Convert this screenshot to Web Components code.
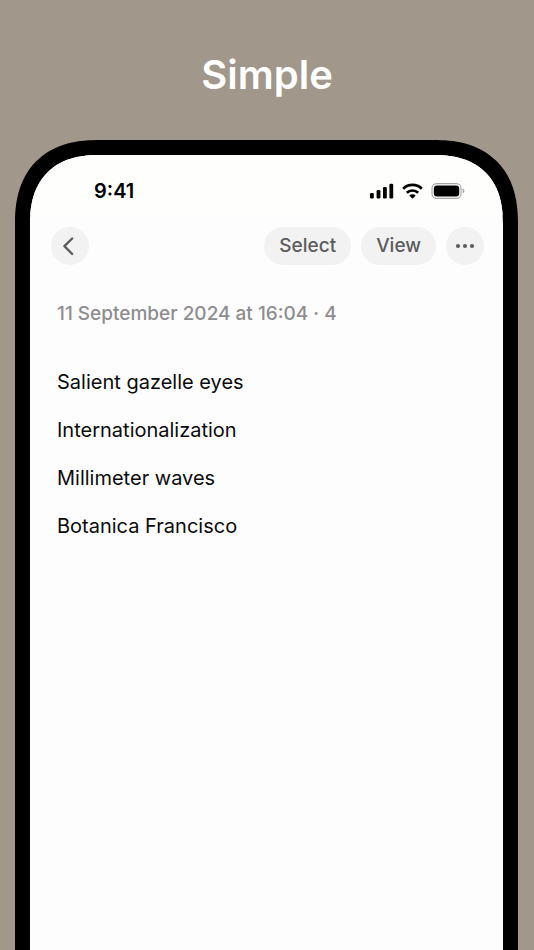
<!DOCTYPE html>
<html lang="en">
<head>
<meta charset="utf-8">
<meta name="viewport" content="width=device-width, initial-scale=1">
<title>Simple</title>
<style>
  html, body { margin: 0; height: 100%; }
  body { background: #a1978a; font-family: Inter, "Liberation Sans", sans-serif; color: #0b0b0b; }
</style>
</head>
<body>
<promo-page heading="Simple">
  <phone-frame>
    <status-bar time="9:41"></status-bar>
    <nav-bar></nav-bar>
    <note-view date="11 September 2024 at 16:04 · 4">
      <note-line>Salient gazelle eyes</note-line>
      <note-line>Internationalization</note-line>
      <note-line>Millimeter waves</note-line>
      <note-line>Botanica Francisco</note-line>
    </note-view>
  </phone-frame>
</promo-page>
<script>
function define(name, html) {
  const template = document.createElement('template');
  template.innerHTML = html;
  customElements.define(name, class extends HTMLElement {
    connectedCallback() {
      if (this.shadowRoot) return;
      this.attachShadow({ mode: 'open' }).append(template.content.cloneNode(true));
      for (const el of this.shadowRoot.querySelectorAll('[data-text]')) {
        el.textContent = this.getAttribute(el.dataset.text);
      }
    }
  });
}

define('promo-page', `
<style>
  :host { display: flex; flex-direction: column; height: 100vh; overflow: hidden; }
  h1 { margin: 0; padding: 50px 0 40px; font-size: 40px; line-height: 50px; font-weight: 600; color: #fff; text-align: center; }
  ::slotted(phone-frame) { flex: 1; }
</style>
<h1 data-text="heading"></h1>
<slot></slot>`);

define('phone-frame', `
<style>
  :host {
    display: block; box-sizing: border-box; margin: 0 16px 0 15px; padding: 15px 15px 0; background: #000;
    border-radius: 84px 84px 0 0; corner-shape: superellipse(1.25);
  }
  main {
    height: 100%; background: #fdfdfd; overflow: hidden;
    border-radius: 69px 69px 0 0; corner-shape: superellipse(1.25);
  }
</style>
<main><slot></slot></main>`);

define('status-bar', `
<style>
  :host { display: flex; justify-content: space-between; align-items: center; box-sizing: border-box; height: 60px; padding: 12px 38px 0 64px; background: #fefefd; color: #000; }
  time { font-size: 20px; line-height: 24px; font-weight: 600; }
  .icons { display: flex; align-items: center; gap: 8px; }
  svg { display: block; }
</style>
<time data-text="time"></time>
<div class="icons">
  <svg width="25" height="16" viewBox="0 0 25 16" role="img" aria-label="Signal">
    <rect x="1" y="10" width="3.8" height="5.5" rx="1.2"/><rect x="7.6" y="7" width="3.8" height="8.5" rx="1.2"/>
    <rect x="14" y="4" width="3.8" height="11.5" rx="1.2"/><rect x="20.4" y="0.8" width="3.8" height="14.7" rx="1.2"/>
  </svg>
  <svg width="21" height="16" viewBox="0 0 21 16" role="img" aria-label="Wi-Fi">
    <g fill="none" stroke="#000" stroke-width="2.7">
      <path d="M1.2 5.7A13.4 13.4 0 0 1 19.8 5.7"/><path d="M4.8 9.8A8.2 8.2 0 0 1 16.2 9.8"/>
    </g>
    <path d="M10.5 15.8 7.3 12.6A4.6 4.6 0 0 1 13.7 12.6Z"/>
  </svg>
  <svg width="34" height="16" viewBox="0 0 34 16" role="img" aria-label="Battery">
    <rect x="1" y="0.6" width="29" height="14.8" rx="4.6" fill="none" stroke="#a5a5a5" stroke-width="1.1"/>
    <rect x="2.8" y="2.4" width="25.4" height="11.2" rx="3"/>
    <path d="M31.6 5.6Q33.4 6.2 33.4 8T31.6 10.4Z" fill="#a5a5a5"/>
  </svg>
</div>`);

define('nav-bar', `
<style>
  :host { display: flex; align-items: center; gap: 10px; padding: 12px 19px 0 21px; }
  button {
    display: flex; align-items: center; justify-content: center; height: 38px; margin: 0; padding: 0 15px;
    border: 0; border-radius: 19px; background: #f2f2f2; color: #5c5c5c; font: 500 19px/24px Inter, "Liberation Sans", sans-serif;
  }
  .round { width: 38px; padding: 0; }
  .back { margin-right: auto; }
  svg { display: block; }
</style>
<button class="round back" aria-label="Back">
  <svg width="38" height="38" viewBox="0 0 38 38" fill="none" stroke="#5c5c5c" stroke-width="2.4" stroke-linecap="round" stroke-linejoin="round"><path d="M21.2 11.5 13.4 19.2 21.2 27"/></svg>
</button>
<button>Select</button>
<button>View</button>
<button class="round" aria-label="More">
  <svg width="38" height="38" viewBox="0 0 38 38" fill="#5c5c5c"><circle cx="12" cy="19" r="2.1"/><circle cx="19" cy="19" r="2.1"/><circle cx="26" cy="19" r="2.1"/></svg>
</button>`);

define('note-view', `
<style>
  :host { display: block; padding: 37px 27px; }
  p { margin: 0 0 42px; font-size: 19px; line-height: 24px; font-weight: 500; color: #8d8d8f; }
  .lines { display: flex; flex-direction: column; gap: 20px; }
</style>
<p data-text="date"></p>
<div class="lines"><slot></slot></div>`);

define('note-line', `
<style>:host { display: block; font-size: 20px; line-height: 28px; }</style>
<slot></slot>`);
</script>
</body>
</html>
